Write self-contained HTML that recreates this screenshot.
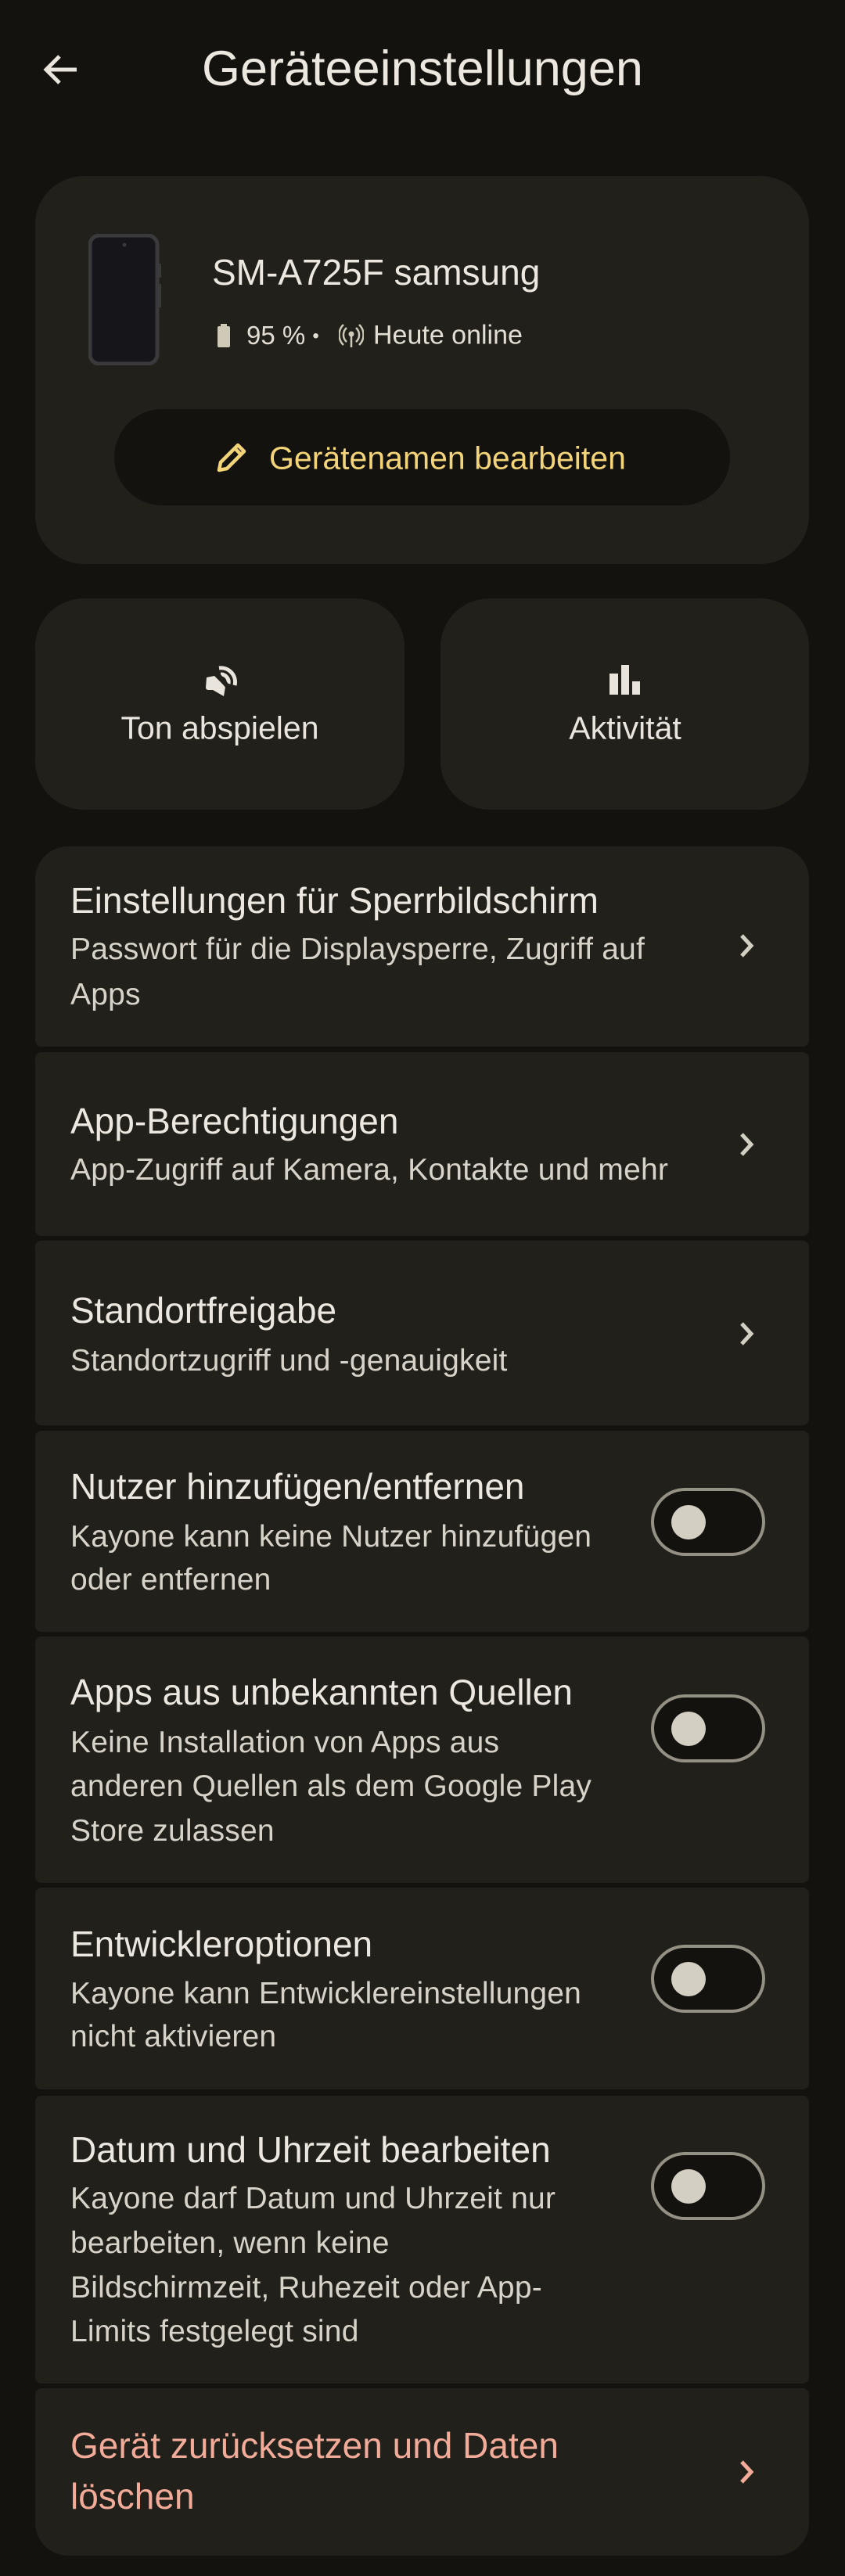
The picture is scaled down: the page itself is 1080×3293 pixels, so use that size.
<!DOCTYPE html>
<html><head><meta charset="utf-8"><style>
*{margin:0;padding:0;box-sizing:border-box}
body{width:1080px;height:3293px;background:#13120e;font-family:"Liberation Sans",sans-serif;color:#e9e5dc;position:relative;overflow:hidden}
.abs{position:absolute}
.card{position:absolute;left:45px;width:989px;background:#21201b}
.t{position:absolute;left:90px;font-size:46px;color:#ece8df;white-space:nowrap;transform:translateY(-50%)}
.s{position:absolute;left:90px;font-size:39px;color:#d8d3c8;white-space:nowrap;transform:translateY(-50%);letter-spacing:0.2px}
.chev{position:absolute;left:942px}
.tog{position:absolute;left:832px;width:146px;height:87px;border:4px solid #959084;border-radius:44px;background:#13120e}
.tog:after{content:"";position:absolute;left:22px;top:50%;width:44px;height:44px;margin-top:-22px;border-radius:50%;background:#d4cfc3}
</style></head><body>
<svg class="abs" style="left:52px;top:66px" width="50" height="46" viewBox="0 0 50 46"><path d="M46 23H8M24 6L7 23l17 17" stroke="#e9e5dc" stroke-width="5" fill="none"/></svg>
<div class="abs" style="left:258px;top:88px;transform:translateY(-50%);font-size:63px;color:#ece8df">Geräteeinstellungen</div>

<div class="card" style="top:225px;height:496px;border-radius:62px"></div>
<svg class="abs" style="left:113px;top:299px" width="94" height="168" viewBox="0 0 94 168"><rect x="2" y="2" width="86" height="164" rx="12" fill="#15151a" stroke="#3a3a3c" stroke-width="5"/><rect x="88" y="38" width="5" height="18" fill="#3a3a3c"/><rect x="88" y="64" width="5" height="30" fill="#3a3a3c"/><circle cx="46" cy="14" r="2.5" fill="#3a3a3c"/></svg>
<div class="abs" style="left:271px;top:348px;transform:translateY(-50%);font-size:46px;color:#ece8df">SM-A725F samsung</div>
<svg class="abs" style="left:277px;top:414px" width="18" height="30" viewBox="0 0 18 30"><rect x="5" y="0" width="8" height="4" fill="#cfc9b8"/><rect x="1" y="3" width="16" height="27" rx="2" fill="#cfc9b8"/></svg>
<div class="abs" style="left:315px;top:429px;transform:translateY(-50%);font-size:33px;color:#e3ded3;white-space:nowrap">95 % <span style="font-size:24px;position:relative;top:-3px">•</span></div>
<svg class="abs" style="left:433px;top:414px" width="32" height="30" viewBox="0 0 32 30"><g stroke="#cfc9b8" stroke-width="2.5" fill="none"><path d="M10 5a12 12 0 0 0 0 18M22 5a12 12 0 0 1 0 18M6 1a18 18 0 0 0 0 26M26 1a18 18 0 0 1 0 26M16 14v16"/></g><circle cx="16" cy="13" r="3.5" fill="#cfc9b8"/></svg>
<div class="abs" style="left:477px;top:429px;transform:translateY(-50%);font-size:34px;color:#e3ded3;white-space:nowrap">Heute online</div>

<div class="abs" style="left:146px;top:523px;width:787px;height:123px;border-radius:62px;background:#13120e"></div>
<svg class="abs" style="left:274px;top:561px" width="42" height="46" viewBox="0 0 42 46"><path d="M6 40l2-10L30 8l8 8-22 22z M26 12l8 8" stroke="#f3d479" stroke-width="4.5" fill="none" stroke-linejoin="round"/></svg>
<div class="abs" style="left:344px;top:586px;transform:translateY(-50%);font-size:41px;color:#f3d479;white-space:nowrap">Gerätenamen bearbeiten</div>

<div class="card" style="top:765px;width:472px;height:270px;border-radius:62px"></div>
<div class="card" style="top:765px;left:563px;width:471px;height:270px;border-radius:62px"></div>
<svg class="abs" style="left:258px;top:846px" width="48" height="46" viewBox="0 0 48 46"><path d="M6 20l10-2 14 14-2 12-14-8H8a3 3 0 0 1-3-3z" fill="#e9e5dc"/><path d="M22 8a18 18 0 0 1 20 22M24 16a10 10 0 0 1 10 12" stroke="#e9e5dc" stroke-width="5" fill="none"/><path d="M10 4l30 36" stroke="#21201b" stroke-width="6"/></svg>
<div class="abs" style="left:281px;top:931px;transform:translate(-50%,-50%);font-size:41px;white-space:nowrap">Ton abspielen</div>
<svg class="abs" style="left:779px;top:850px" width="40" height="38"><rect x="0" y="11" width="11" height="27" fill="#e9e5dc"/><rect x="15" y="0" width="10" height="38" fill="#e9e5dc"/><rect x="29" y="21" width="10" height="17" fill="#e9e5dc"/></svg>
<div class="abs" style="left:799px;top:931px;transform:translate(-50%,-50%);font-size:41px;white-space:nowrap">Aktivität</div>

<div class="card" style="top:1082px;height:256px;border-radius:42px 42px 8px 8px">
<div class="t" style="left:45px;top:69px">Einstellungen für Sperrbildschirm</div>
<div class="s" style="left:45px;top:132px">Passwort für die Displaysperre, Zugriff auf</div>
<div class="s" style="left:45px;top:190px">Apps</div>
</div>
<div class="card" style="top:1345px;height:235px;border-radius:8px">
<div class="t" style="left:45px;top:88px">App-Berechtigungen</div>
<div class="s" style="left:45px;top:151px">App-Zugriff auf Kamera, Kontakte und mehr</div>
</div>
<div class="card" style="top:1586px;height:236px;border-radius:8px">
<div class="t" style="left:45px;top:89px">Standortfreigabe</div>
<div class="s" style="left:45px;top:154px">Standortzugriff und -genauigkeit</div>
</div>
<svg class="chev" style="top:1193px" width="26" height="32"><path d="M6 3l12 13L6 29" stroke="#d4cfc3" stroke-width="5" fill="none"/></svg>
<svg class="chev" style="top:1447px" width="26" height="32"><path d="M6 3l12 13L6 29" stroke="#d4cfc3" stroke-width="5" fill="none"/></svg>
<svg class="chev" style="top:1689px" width="26" height="32"><path d="M6 3l12 13L6 29" stroke="#d4cfc3" stroke-width="5" fill="none"/></svg>

<div class="card" style="top:1829px;height:257px;border-radius:8px">
<div class="t" style="left:45px;top:71px">Nutzer hinzufügen/entfernen</div>
<div class="s" style="left:45px;top:136px">Kayone kann keine Nutzer hinzufügen</div>
<div class="s" style="left:45px;top:191px">oder entfernen</div>
</div>
<div class="tog" style="top:1902px"></div>

<div class="card" style="top:2092px;height:315px;border-radius:8px">
<div class="t" style="left:45px;top:71px">Apps aus unbekannten Quellen</div>
<div class="s" style="left:45px;top:136px">Keine Installation von Apps aus</div>
<div class="s" style="left:45px;top:192px">anderen Quellen als dem Google Play</div>
<div class="s" style="left:45px;top:249px">Store zulassen</div>
</div>
<div class="tog" style="top:2166px"></div>

<div class="card" style="top:2413px;height:258px;border-radius:8px">
<div class="t" style="left:45px;top:72px">Entwickleroptionen</div>
<div class="s" style="left:45px;top:136px">Kayone kann Entwicklereinstellungen</div>
<div class="s" style="left:45px;top:191px">nicht aktivieren</div>
</div>
<div class="tog" style="top:2486px"></div>

<div class="card" style="top:2679px;height:368px;border-radius:8px">
<div class="t" style="left:45px;top:69px">Datum und Uhrzeit bearbeiten</div>
<div class="s" style="left:45px;top:132px">Kayone darf Datum und Uhrzeit nur</div>
<div class="s" style="left:45px;top:189px">bearbeiten, wenn keine</div>
<div class="s" style="left:45px;top:246px">Bildschirmzeit, Ruhezeit oder App-</div>
<div class="s" style="left:45px;top:302px">Limits festgelegt sind</div>
</div>
<div class="tog" style="top:2751px"></div>

<div class="card" style="top:3053px;height:214px;border-radius:8px 8px 42px 42px">
<div class="t" style="left:45px;top:73px;color:#f2ab98">Gerät zurücksetzen und Daten</div>
<div class="t" style="left:45px;top:138px;color:#f2ab98">löschen</div>
</div>
<svg class="chev" style="top:3144px" width="26" height="32"><path d="M6 3l12 13L6 29" stroke="#f2ab98" stroke-width="5" fill="none"/></svg>
</body></html>
